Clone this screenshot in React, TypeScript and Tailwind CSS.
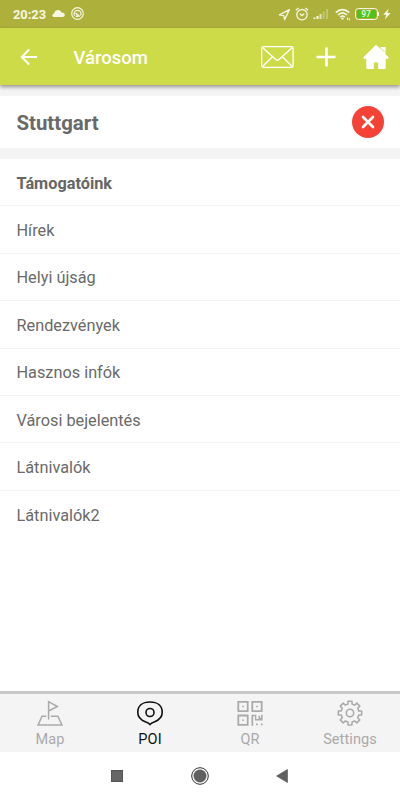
import React from 'react';

const menuItems = [
  'Támogatóink',
  'Hírek',
  'Helyi újság',
  'Rendezvények',
  'Hasznos infók',
  'Városi bejelentés',
  'Látnivalók',
  'Látnivalók2',
];

function MapIcon() {
  return (
    <svg width="26" height="26" viewBox="0 0 26 26" fill="none" stroke="currentColor" strokeWidth="1.5">
      <path d="M11.6 19.500V1.700l8.800 4.800-8.800 4.500" />
      <path d="M9.4 16.300H5L1.100 25h23.800l-4-8.700h-7" />
    </svg>
  );
}

function PoiIcon() {
  return (
    <svg width="28" height="26" viewBox="0 0 28 26" fill="none" stroke="currentColor" strokeWidth="1.6">
      <path d="M14 24.500c-1-1.300-2.800-2-4.800-2.800C4.500 19.900 1.800 16.800 1.800 12.300 1.800 5.800 6.500 2 14 2S26.200 5.800 26.200 12.300c0 4.500-2.700 7.600-7.400 9.400-2 .8-3.800 1.500-4.800 2.800z" />
      <circle cx="14" cy="12.500" r="4" />
    </svg>
  );
}

function QrIcon() {
  return (
    <svg width="26" height="26" viewBox="0 0 26 26" fill="none" stroke="currentColor" strokeWidth="1.8">
      <path d="M1.300 1.800h9.400v9.400H1.300zM15.300 1.800h9.400v9.400h-9.400zM1.300 15.500h9.400v9.400H1.300z" />
      <path
        fill="currentColor"
        stroke="none"
        d="M5.200 5.700h1.600v1.600H5.200zM19.200 5.700h1.600v1.600h-1.600zM5.200 19.400h1.600V21H5.200zM14.500 14.700h4.800v4.200h2.200v-3.200h1.600v2.300h.9v-3.300h1.600v5.800h-7.600v-4.200h-1.800v9.400h-1.700zM19 23.600h1.700v1.700H19zM23.900 23.600h1.700v1.700h-1.700z"
      />
    </svg>
  );
}

function SettingsIcon() {
  return (
    <svg width="26" height="26" viewBox="-1 0 26 26" fill="none" stroke="currentColor" strokeWidth="1.5" strokeLinejoin="round">
      <path d="M10 1.200h4v2.900q1.500.4 2.700 1.100l2.100-2.100 3 3-2.100 2.100q.7 1.300 1 2.800h3v4h-3q-.3 1.500-1 2.700l2.100 2.200-3 3-2.100-2q-1.200.7-2.700 1.100V25h-4v-3q-1.500-.4-2.700-1.100l-2.100 2-3-3 2.100-2.200q-.7-1.200-1-2.700h-3v-4h3q.3-1.500 1-2.800L2.200 6.100l3-3 2.100 2.100q1.200-.7 2.700-1.100z" />
      <circle cx="12" cy="13" r="3.700" />
    </svg>
  );
}

const tabs = [
  { label: 'Map', icon: <MapIcon />, active: false },
  { label: 'POI', icon: <PoiIcon />, active: true },
  { label: 'QR', icon: <QrIcon />, active: false },
  { label: 'Settings', icon: <SettingsIcon />, active: false },
];

function StatusBar() {
  return (
    <div className="flex h-7 shrink-0 items-center justify-between bg-[#adb03b] pl-[13px] pr-[9px] text-[#f6f7e4]">
      <div className="flex items-center">
        <span className="w-[33px] pt-0.5 text-[12.8px] font-bold leading-none">20:23</span>
        <svg className="ml-1.5" width="13" height="9" viewBox="0 0 13 9" fill="currentColor">
          <path d="M2.300 8C.9 8 .3 7.200.3 6.400c0-1 .9-1.600 1.800-1.600C2.300 2.500 3.800 1 6 1c1.800 0 3 1 3.500 2.500 2-.2 3.300.9 3.300 2.300 0 1.300-.9 2.200-2.100 2.200z" />
        </svg>
        <svg className="ml-1.5" width="13" height="13" viewBox="0 0 13 13" fill="none" stroke="currentColor">
          <circle cx="6.500" cy="6.500" r="5.800" strokeWidth="1.200" />
          <path d="M3.600 8.800C2.200 6.200 3.900 3.300 6.500 3.300c3 0 4.300 2.900 2.900 5.200" strokeWidth="1.200" />
          <path d="M4.500 6 8.700 9.500M4.700 9.300h2.700" strokeWidth="1.500" />
        </svg>
      </div>
      <div className="flex items-center">
        <svg width="13" height="13" viewBox="0 0 13 13" fill="none" stroke="currentColor" strokeWidth="1.300" strokeLinejoin="round">
          <path d="M11.400 1.700 1.400 6.900l4.400.7.800 4z" />
        </svg>
        <svg className="ml-1" width="14" height="14" viewBox="0 0 14 14" fill="none" stroke="currentColor" strokeWidth="1.300">
          <circle cx="7" cy="7.700" r="5.200" />
          <path d="M.8 3.300 3.600 1.100M13.200 3.300l-2.800-2.200M4.800 6.700 7 8.600l2.300-1.900" />
        </svg>
        <svg className="ml-1" width="16" height="12" viewBox="0 0 16 12" fill="currentColor">
          <path d="M.5 9.500h2V11h-2zM3.500 8h2v3h-2z" />
          <path opacity=".75" d="M6.500 6h2v5h-2z" />
          <path opacity=".3" d="M9.700 3.500h2V11h-2zM13 1h2v10h-2z" />
        </svg>
        <svg className="ml-1.5" width="16" height="13" viewBox="0 0 16 13" fill="none" stroke="currentColor" strokeWidth="1.600">
          <path d="M.8 4.600c4-4 9.400-4 13.400 0M3 7c2.800-2.800 6.200-2.800 9 0M5.200 9.300c1.500-1.500 3.100-1.500 4.600 0" />
          <path d="M6.500 10.400h2l-1 1.300zM12.500 9.500v2.500M14.300 10v2.500" strokeWidth="1" />
        </svg>
        <div className="ml-1 flex h-3 w-[23px] rounded-[3.500px] border-[1.500px] border-[#f6f7e4] p-px">
          <div className="flex flex-1 items-center justify-center rounded-[1px] bg-[#4fc31c] text-[8.500px] font-medium leading-none">97</div>
        </div>
        <div className="h-1 w-[1.500px] bg-[#f6f7e4]" />
        <svg className="ml-1" width="8" height="12" viewBox="0 0 8 12" fill="currentColor">
          <path d="M5.700.5.300 6.800h3L1.800 11.500l5.900-6.500H4.400z" />
        </svg>
      </div>
    </div>
  );
}

function Header() {
  return (
    <header className="relative flex h-[57px] shrink-0 items-center bg-[#cddb49] pl-5 pr-[11px] text-white shadow-[0_2px_4px_rgba(0,0,0,0.4)]">
      <svg width="18" height="18" viewBox="0 0 18 18" fill="none" stroke="currentColor" strokeWidth="1.900">
        <path d="M17 9H2M9.200 1.500 1.700 9l7.500 7.500" />
      </svg>
      <h1 className="ml-[35.500px] pt-[3px] text-[18.500px] font-medium leading-none">Városom</h1>
      <div className="ml-auto flex items-center">
        <svg width="33" height="22" viewBox="0 0 33 22" fill="none" stroke="currentColor" strokeWidth="1.300">
          <rect x=".7" y=".7" width="31.400" height="20.600" rx="2" />
          <path d="m1.500 1.500 13.300 12c1.200 1 2 1 3.200 0L31.300 1.500M1.500 20.500l10.200-10M31.300 20.500l-10.200-10" />
        </svg>
        <svg className="ml-[22px]" width="20" height="20" viewBox="0 0 20 20" stroke="currentColor" strokeWidth="2.600">
          <path d="M10.500.5v19M.5 10h19" />
        </svg>
        <svg className="ml-[27px]" width="26" height="26" viewBox="0 0 26 26" fill="currentColor">
          <path d="M13 .8.500 13.300v1.500h2.800V24c0 .6.400 1 1 1h6.500v-6.500h4.400V25h6.500c.6 0 1-.4 1-1v-9.200h2.800v-1.500l-3-3V3h-5.200v1.800z" />
          <path d="m17 3.500 4.500 4.500" stroke="#cddb49" strokeWidth=".8" />
        </svg>
      </div>
    </header>
  );
}

export default function App() {
  return (
    <div className="flex h-[800px] w-[400px] flex-col overflow-hidden bg-white font-['Roboto',sans-serif]">
      <StatusBar />
      <Header />

      <main className="flex flex-1 flex-col">
        <div className="border-b-[11px] border-t-[11px] border-[#f4f4f4]">
          <div className="flex h-[52px] items-center justify-between pl-[16.500px] pr-4">
            <h2 className="pt-[3px] text-[20.400px] font-bold leading-none text-[#696969]">Stuttgart</h2>
            <button className="flex size-8 items-center justify-center rounded-full bg-[#f44336]">
              <svg width="14" height="14" viewBox="0 0 14 14" stroke="white" strokeWidth="2.700" strokeLinecap="round">
                <path d="m2 2 10 10M12 2 2 12" />
              </svg>
            </button>
          </div>
        </div>

        <ul>
          {menuItems.map((item, i) => (
            <li
              key={item}
              className={`flex h-[47.400px] items-center px-[16.500px] pt-[3px] text-[16.300px] leading-none ${
                i === 0 ? 'font-bold text-[#666]' : 'font-normal text-[#6a6a6a]'
              } ${i < menuItems.length - 1 ? 'border-b border-[#f4f4f4]' : ''}`}
            >
              {item}
            </li>
          ))}
        </ul>
      </main>

      {/* Bottom tabs */}
      <nav className="flex h-[61px] shrink-0 border-t-[3px] border-[#c8c8c8] bg-[#f4f4f4]">
        {tabs.map(tab => (
          <button
            key={tab.label}
            className={`flex flex-1 flex-col items-center pt-1.5 ${tab.active ? 'text-[#111]' : 'text-[#aaa]'}`}
          >
            {tab.icon}
            <span className="mt-[7px] text-[14.500px] leading-none tracking-[0.1px]">{tab.label}</span>
          </button>
        ))}
      </nav>

      {/* Android navigation */}
      <div className="flex h-12 shrink-0 items-center justify-between pl-[111px] pr-28 text-[#606060]">
        <div className="size-3 border border-[#555] bg-[#666]" />
        <svg width="18" height="18" viewBox="0 0 18 18">
          <circle cx="9" cy="9" r="8.300" fill="none" stroke="#333" strokeWidth="1" />
          <circle cx="9" cy="9" r="6.200" fill="currentColor" stroke="#555" strokeWidth=".5" />
        </svg>
        <svg width="12" height="14" viewBox="0 0 12 14" fill="currentColor">
          <path d="M.5 7 11.500.4v13.200z" stroke="#444" strokeWidth=".5" />
        </svg>
      </div>
    </div>
  );
}
